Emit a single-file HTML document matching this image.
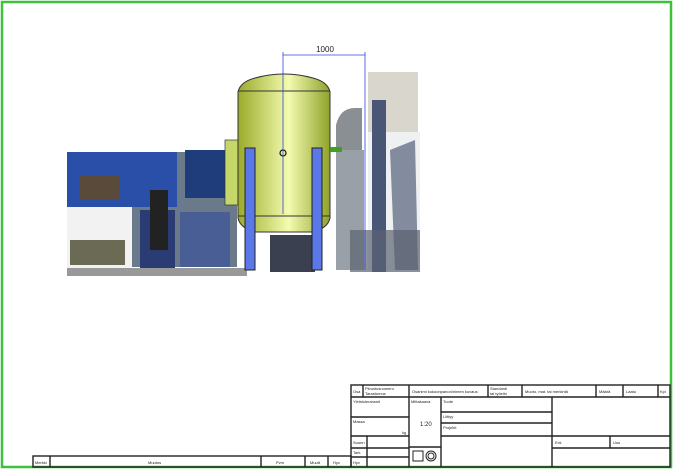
<!DOCTYPE html><html><head><style>
body{margin:0;background:#fff;width:675px;height:471px;overflow:hidden;font-family:"Liberation Sans",sans-serif}
.t{font-size:4px;fill:#222}
</style></head><body>
<svg width="675" height="471" viewBox="0 0 675 471" xmlns="http://www.w3.org/2000/svg">
<defs>
<linearGradient id="g" x1="0" x2="1"><stop offset="0" stop-color="#9aab2a"/><stop offset=".55" stop-color="#f4fbb0"/><stop offset="1" stop-color="#8fa22a"/></linearGradient>
</defs>
<rect x="2" y="2" width="669" height="465" fill="none" stroke="#3ec23e" stroke-width="2.5"/>
<rect x="67" y="152" width="170" height="115" fill="#6a7a8a"/>
<rect x="67" y="152" width="110" height="55" fill="#2a4fa8"/>
<rect x="185" y="150" width="50" height="48" fill="#1e3d7a"/>
<rect x="67" y="207" width="65" height="65" fill="#f2f2f2"/>
<rect x="140" y="210" width="35" height="60" fill="#2b3c75"/>
<rect x="180" y="212" width="50" height="55" fill="#4a5e96"/>
<rect x="150" y="190" width="18" height="60" fill="#222"/>
<rect x="80" y="175" width="40" height="25" fill="#5a4a3a"/>
<rect x="70" y="240" width="55" height="25" fill="#6b6b55"/>
<rect x="67" y="268" width="180" height="8" fill="#999"/>
<path d="M336 150 L336 125 Q340 108 355 108 L362 108 L362 150 Z" fill="#8a8f94"/>
<rect x="336" y="150" width="28" height="120" fill="#9aa0a8"/>
<rect x="368" y="72" width="50" height="60" fill="#d9d6ce"/>
<rect x="368" y="132" width="52" height="138" fill="#eef0f2"/>
<rect x="372" y="100" width="14" height="172" fill="#4a5676"/>
<path d="M390 150 L415 140 L418 270 L395 270 Z" fill="#56607a" opacity=".7"/>
<rect x="350" y="230" width="70" height="42" fill="#5a6270" opacity=".7"/>
<rect x="270" y="235" width="45" height="37" fill="#3a4050"/>
<rect x="225" y="140" width="14" height="65" fill="#c6d76a" stroke="#333" stroke-width=".7"/>
<path d="M238 92 Q240 82 255 78 Q284 70 313 78 Q328 82 330 92 L330 218 Q328 228 313 232 L255 232 Q240 228 238 218 Z" fill="url(#g)" stroke="#333" stroke-width="1"/>
<line x1="238" y1="91" x2="330" y2="91" stroke="#333"/>
<line x1="238" y1="216" x2="330" y2="216" stroke="#333"/>
<rect x="330" y="147" width="12" height="5" fill="#3ea020"/>
<rect x="245" y="148" width="10" height="122" fill="#5a78e8" stroke="#222" stroke-width="1"/>
<rect x="312" y="148" width="10" height="122" fill="#5a78e8" stroke="#222" stroke-width="1"/>
<circle cx="283" cy="153" r="3" fill="none" stroke="#111" stroke-width="1.2"/>
<line x1="283" y1="52" x2="283" y2="214" stroke="#3344dd" stroke-width=".8"/>
<line x1="365" y1="52" x2="365" y2="270" stroke="#3344dd" stroke-width=".8"/>
<line x1="283" y1="55" x2="365" y2="55" stroke="#3344dd" stroke-width=".8"/>
<text x="325" y="52" font-size="8" text-anchor="middle" fill="#222">1000</text>
<g fill="none" stroke="#222" stroke-width="1.4">
<rect x="351" y="385" width="319" height="82"/>
<line x1="351" y1="397" x2="670" y2="397"/>
<line x1="363" y1="385" x2="363" y2="397"/>
<line x1="409" y1="385" x2="409" y2="467"/>
<line x1="488" y1="385" x2="488" y2="397"/>
<line x1="522" y1="385" x2="522" y2="397"/>
<line x1="596" y1="385" x2="596" y2="397"/>
<line x1="623" y1="385" x2="623" y2="397"/>
<line x1="658" y1="385" x2="658" y2="397"/>
<line x1="351" y1="417" x2="409" y2="417"/>
<line x1="351" y1="436" x2="409" y2="436"/>
<line x1="351" y1="448" x2="409" y2="448"/>
<line x1="351" y1="457" x2="409" y2="457"/>
<line x1="367" y1="436" x2="367" y2="467"/>
<line x1="441" y1="397" x2="441" y2="467"/>
<line x1="409" y1="447" x2="441" y2="447"/>
<line x1="441" y1="412" x2="552" y2="412"/>
<line x1="441" y1="423" x2="552" y2="423"/>
<line x1="441" y1="436" x2="552" y2="436"/>
<line x1="552" y1="397" x2="552" y2="467"/>
<line x1="552" y1="436" x2="670" y2="436"/>
<line x1="552" y1="448" x2="670" y2="448"/>
<line x1="610" y1="436" x2="610" y2="448"/>
<rect x="33" y="456" width="318" height="11"/>
<line x1="50" y1="456" x2="50" y2="467"/>
<line x1="261" y1="456" x2="261" y2="467"/>
<line x1="305" y1="456" x2="305" y2="467"/>
<line x1="328" y1="456" x2="328" y2="467"/>
<rect x="413" y="451" width="10" height="10" stroke-width="1"/>
<circle cx="431" cy="456" r="5" stroke-width="1"/><circle cx="431" cy="456" r="3" stroke-width="1"/>
</g>
<g class="t">
<text x="353" y="393">Osa</text>
<text x="365" y="390">Piirustusnumero</text><text x="365" y="395">Tarastumus</text>
<text x="412" y="393">Osanimi kokoonpanon/nimen kuvaus</text>
<text x="490" y="390">Standardi</text><text x="490" y="395">tai työelin</text>
<text x="525" y="393">Muoto, mat. tai merkintä</text>
<text x="599" y="393">Määrä</text><text x="626" y="393">Laatu</text><text x="660" y="393">Kpl</text>
<text x="353" y="403">Yleistoleranssit</text>
<text x="411" y="403">Mittakaava</text>
<text x="420" y="426" font-size="6">1:20</text>
<text x="443" y="403">Tuote</text><text x="443" y="418">Liittyy</text><text x="443" y="429">Projekti</text>
<text x="353" y="423">Massa</text><text x="402" y="434">kg</text>
<text x="353" y="444">Suunn</text><text x="353" y="454">Tark</text><text x="353" y="464">Hyv</text>
<text x="555" y="444">Erit.</text><text x="613" y="444">Uus</text>
<text x="35" y="464">Merkki</text><text x="148" y="464">Muutos</text><text x="276" y="464">Pvm</text><text x="310" y="464">Muutt</text><text x="333" y="464">Hyv</text>
</g>
</svg>
</body></html>
